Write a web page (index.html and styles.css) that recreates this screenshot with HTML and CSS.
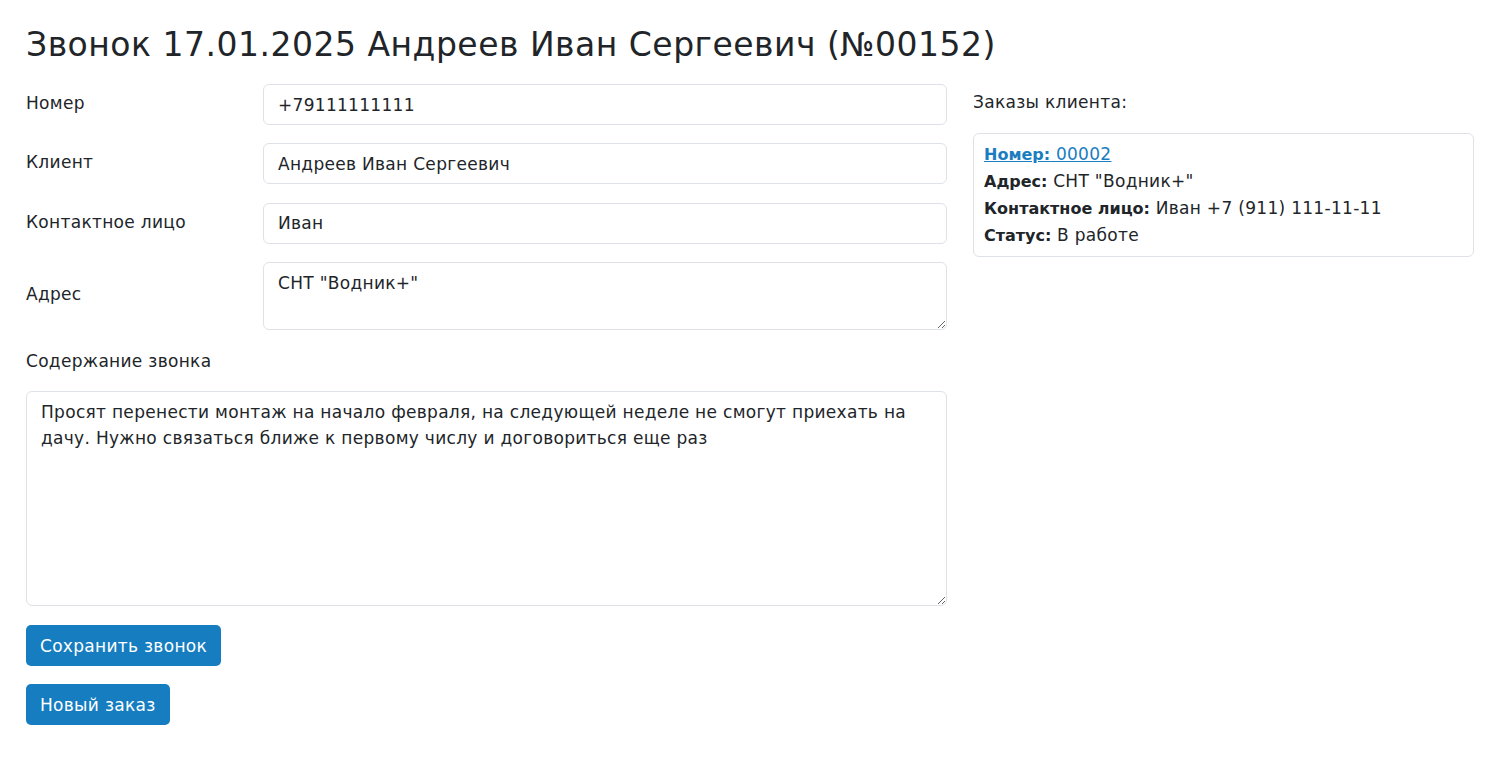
FILE: index.html
```html
<!DOCTYPE html>
<html lang="ru">
<head>
<meta charset="utf-8">
<title>Звонок</title>
<link rel="stylesheet" href="styles.css">
</head>
<body>
<div class="page">
  <h2 class="title">Звонок 17.01.2025 Андреев Иван Сергеевич (№00152)</h2>
  <div class="layout">
    <div class="main">
      <div class="form-row">
        <label class="form-label">Номер</label>
        <input class="field" type="text" value="+79111111111">
      </div>
      <div class="form-row">
        <label class="form-label">Клиент</label>
        <input class="field" type="text" value="Андреев Иван Сергеевич">
      </div>
      <div class="form-row">
        <label class="form-label">Контактное лицо</label>
        <input class="field" type="text" value="Иван">
      </div>
      <div class="form-row">
        <label class="form-label">Адрес</label>
        <textarea class="field area-small">СНТ "Водник+"</textarea>
      </div>
      <label class="block-label">Содержание звонка</label>
      <textarea class="field area-big">Просят перенести монтаж на начало февраля, на следующей неделе не смогут приехать на дачу. Нужно связаться ближе к первому числу и договориться еще раз</textarea>
      <div class="actions">
        <button class="btn" type="button">Сохранить звонок</button>
        <button class="btn" type="button">Новый заказ</button>
      </div>
    </div>
    <div class="side">
      <div class="side-title">Заказы клиента:</div>
      <div class="order-card">
        <div class="order-line"><a class="order-link" href="#"><b>Номер:</b> 00002</a></div>
        <div class="order-line"><b>Адрес:</b> СНТ "Водник+"</div>
        <div class="order-line"><b>Контактное лицо:</b> Иван +7 (911) 111-11-11</div>
        <div class="order-line"><b>Статус:</b> В работе</div>
      </div>
    </div>
  </div>
</div>
</body>
</html>
```

FILE: styles.css
```css
* { box-sizing: border-box; }
html, body { margin: 0; padding: 0; background: #fff; }
body {
  font-family: "DejaVu Sans", "Noto Sans", sans-serif;
  font-size: 17px;
  letter-spacing: 0.3px;
  color: #212529;
}
.page { padding: 26px 14px 0 26px; }
.title {
  margin: 0 0 20px;
  font-size: 33px;
  font-weight: 500;
  line-height: 38px;
  letter-spacing: 0.5px;
}
.layout {
  display: grid;
  grid-template-columns: 921px 1fr;
  gap: 26px;
}
.main { display: flex; flex-direction: column; }
.form-row {
  display: grid;
  grid-template-columns: 211px 1fr;
  column-gap: 26px;
  align-items: center;
  margin-bottom: 18.3px;
}
.form-label { line-height: 24px; margin-top: -3px; }
.field {
  font: inherit;
  letter-spacing: inherit;
  color: #212529;
  border: 1px solid #dee2e6;
  border-radius: 6px;
  background: #fff;
  padding: 0 14px;
  width: 100%;
  height: 41px;
  outline: none;
}
textarea.field {
  padding: 7px 14px;
  line-height: 26px;
  resize: vertical;
}
.area-small { height: 68px; }
.area-big { height: 215px; }
.block-label { line-height: 26px; margin: 0 0 17px; }
.actions {
  display: flex;
  flex-direction: column;
  align-items: flex-start;
  gap: 18px;
  margin-top: 19px;
}
.btn {
  font: inherit;
  letter-spacing: inherit;
  color: #fff;
  background: #157dc0;
  border: none;
  border-radius: 5px;
  height: 41px;
  padding: 0 14px;
}
.side-title { line-height: 36px; margin-bottom: 13px; }
.order-card {
  border: 1px solid #dee2e6;
  border-radius: 6px;
  padding: 7px 10px;
}
.order-line { line-height: 27px; }
.order-line b { font-weight: 700; font-size: 16px; letter-spacing: 0; }
.order-link { color: #1a7dc0; text-decoration: underline; }
```
